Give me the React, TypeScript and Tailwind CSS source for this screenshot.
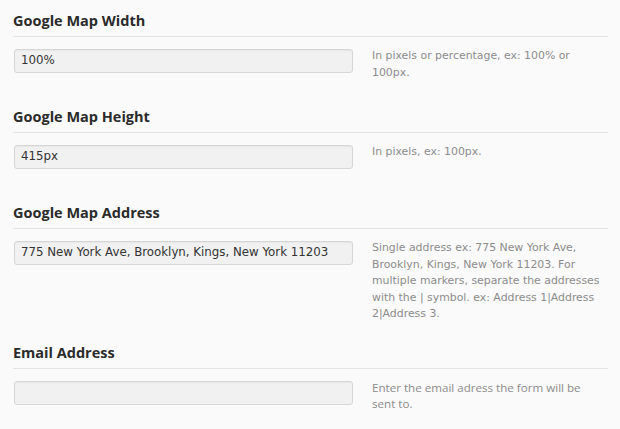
import React from "react";

function Section({
  title,
  value,
  desc,
  alt,
}: {
  title: string;
  value: string;
  desc: string;
  alt?: boolean;
}) {
  return (
    <div>
      <h3 className="font-['Open_Sans',sans-serif] text-[14.5px] font-bold leading-[20px] text-[#2b2b2b] pb-[5px] border-b border-[#e3e3e3]">
        {title}
      </h3>
      <div className="flex items-start mt-[12px] min-h-[58px]">
        <div className="ml-px w-[339px] h-[24px] rounded-[3px] border border-[#d6d6d6] bg-[#f1f1f1] shadow-[inset_0_1px_1px_rgba(0,0,0,0.04)] px-[6px] flex items-center font-['DejaVu_Sans',sans-serif] text-[11.8px] text-[#333]">
          {value}
        </div>
        {alt ? (
          <p className="ml-[19px] mt-[-1px] w-[222px] font-['Open_Sans',sans-serif] text-[11.6px] leading-[16px] text-[#8c8c8c] pb-[20px]">
            {desc}
          </p>
        ) : (
          <p className="ml-[19px] mt-[-1px] w-[230px] font-['DejaVu_Sans',sans-serif] text-[10.9px] leading-[16.5px] text-[#8c8c8c] pb-[20px]">
            {desc}
          </p>
        )}
      </div>
    </div>
  );
}

export default function App() {
  return (
    <div className="bg-[#fafafa] min-h-[429px] w-[620px] pl-[13px] pr-[12px] pt-[11px]">
      <Section
        title="Google Map Width"
        value="100%"
        desc="In pixels or percentage, ex: 100% or 100px."
      />
      <Section
        title="Google Map Height"
        value="415px"
        desc="In pixels, ex: 100px."
      />
      <Section
        title="Google Map Address"
        value="775 New York Ave, Brooklyn, Kings, New York 11203"
        desc="Single address ex: 775 New York Ave, Brooklyn, Kings, New York 11203. For multiple markers, separate the addresses with the | symbol. ex: Address 1|Address 2|Address 3."
      />
      <Section
        title="Email Address"
        value=""
        desc="Enter the email adress the form will be sent to."
        alt
      />
    </div>
  );
}
